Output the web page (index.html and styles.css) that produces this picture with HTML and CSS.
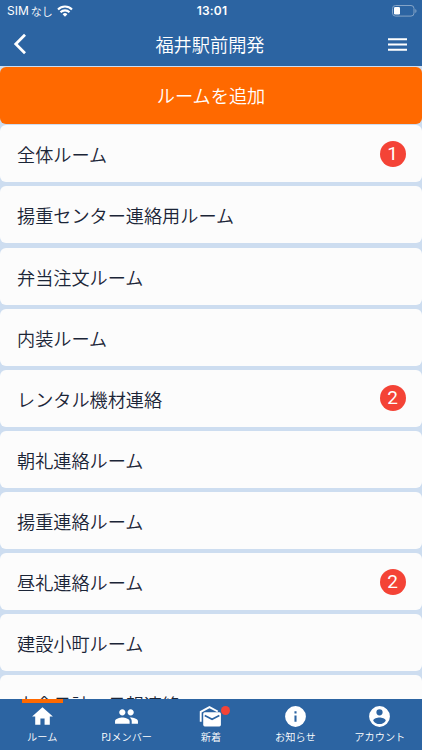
FILE: index.html
```
<!DOCTYPE html>
<html lang="ja">
<head>
<meta charset="utf-8">
<title>福井駅前開発</title>
<link rel="stylesheet" href="styles.css">
</head>
<body>
<div class="app">
  <header class="header">
    <div class="status">
      <span class="carrier"><span class="sim">SIM</span>なし
        <svg class="wifi" viewBox="0 0 16 12"><g fill="none" stroke="#fff" stroke-width="2.1"><path d="M1 4.4a10 10 0 0 1 14 0"/><path d="M3.5 7.2a6.4 6.4 0 0 1 9 0"/></g><path fill="#fff" d="M5.6 9.2a3.5 3.5 0 0 1 4.8 0L8 11.7z"/></svg>
      </span>
      <time class="clock">13:01</time>
      <svg class="battery" viewBox="0 0 25 12"><rect x=".5" y=".5" width="21.5" height="10.6" rx="3" fill="none" stroke="#85a4c7"/><rect x="2" y="2" width="6" height="7.6" rx="1.3" fill="#fff"/><path d="M23.3 4v4q1.2-.5 1.2-2t-1.2-2" fill="#85a4c7"/></svg>
    </div>
    <div class="titlebar">
      <svg class="back" viewBox="0 0 14 22"><path d="M12 1.8 2.8 11l9.2 9.2" fill="none" stroke="#fff" stroke-width="2.8"/></svg>
      <h1 class="title">福井駅前開発</h1>
      <svg class="menu" viewBox="0 0 19 13"><path d="M0 1.2h19M0 6.5h19M0 11.8h19" stroke="#fff" stroke-width="2"/></svg>
    </div>
  </header>
  <main class="rooms">
    <button class="add">ルームを追加</button>
    <ul class="list">
      <li class="room">全体ルーム<span class="badge">1</span></li>
      <li class="room">揚重センター連絡用ルーム</li>
      <li class="room">弁当注文ルーム</li>
      <li class="room">内装ルーム</li>
      <li class="room">レンタル機材連絡<span class="badge">2</span></li>
      <li class="room">朝礼連絡ルーム</li>
      <li class="room">揚重連絡ルーム</li>
      <li class="room">昼礼連絡ルーム<span class="badge">2</span></li>
      <li class="room">建設小町ルーム</li>
      <li class="room">大倉日誌・日報連絡</li>
    </ul>
  </main>
  <nav class="tabs">
    <a class="tab active"><svg class="icon" viewBox="0 0 24 24"><path d="M10 20v-6h4v6h5v-8h3L12 3 2 12h3v8z"/></svg>ルーム</a>
    <a class="tab"><svg class="icon" viewBox="0 0 24 24"><path d="M16 11c1.66 0 2.99-1.34 2.99-3S17.66 5 16 5s-3 1.34-3 3 1.34 3 3 3zm-8 0c1.66 0 2.99-1.34 2.99-3S9.66 5 8 5 5 6.34 5 8s1.34 3 3 3zm0 2c-2.33 0-7 1.17-7 3.5V19h14v-2.5c0-2.33-4.67-3.5-7-3.5zm8 0c-.29 0-.62.02-.97.05 1.16.84 1.97 1.97 1.97 3.45V19h6v-2.5c0-2.33-4.67-3.5-7-3.5z"/></svg>PJメンバー</a>
    <a class="tab"><svg class="icon" viewBox="0 0 24 24"><path d="M2.6 17V7.500L11 3l8 4.200" fill="none" stroke="#fff" stroke-width="1.8"/><rect x="5" y="8" width="17" height="13.5" rx="1.5"/><path d="m6.500 11 7 3.700 7-3.700" fill="none" stroke="#2c64a2" stroke-width="1.5"/></svg><i class="dot"></i>新着</a>
    <a class="tab"><svg class="icon" viewBox="0 0 24 24"><path d="M12 2a10 10 0 1 0 0 20 10 10 0 0 0 0-20zm1 15h-2v-6h2zm0-8h-2V7h2z"/></svg>お知らせ</a>
    <a class="tab"><svg class="icon" viewBox="0 0 24 24"><path d="M12 2a10 10 0 1 0 0 20 10 10 0 0 0 0-20zm0 3a3 3 0 1 1 0 6 3 3 0 0 1 0-6zm0 14.2a7.200 7.200 0 0 1-6-3.220c.03-1.990 4-3.080 6-3.080s5.970 1.090 6 3.080a7.200 7.200 0 0 1-6 3.220z"/></svg>アカウント</a>
  </nav>
</div>
</body>
</html>
```
FILE: styles.css
```
* { box-sizing: border-box; }
body { margin: 0; font-family: "Noto Sans CJK JP", sans-serif; color: #1b2537; }
.app { height: 750px; display: flex; flex-direction: column; overflow: hidden; background: #cdddf0; }
.header { height: 66px; flex: none; background: #2c64a2; color: #fff; }
.status { height: 22px; padding: 0 5px 0 7px; display: grid; grid-template-columns: 1fr auto 1fr; align-items: center; }
.carrier { display: flex; align-items: center; font-size: 11px; font-weight: 350; line-height: 22px; }
.sim { font-family: Inter, sans-serif; font-size: 12px; font-weight: 400; margin-right: 2px; }
.wifi { width: 16px; height: 12px; margin-left: 4px; }
.clock { font: 600 12px/22px Inter, sans-serif; letter-spacing: .2px; }
.battery { width: 25px; height: 12px; justify-self: end; }
.titlebar { height: 44px; padding: 0 15px 0 13px; display: grid; grid-template-columns: 1fr auto 1fr; align-items: center; }
.back { width: 14px; height: 22px; }
.title { margin: 0; padding-top: 1px; font-size: 18.2px; font-weight: 350; line-height: 43px; }
.menu { width: 19px; height: 13px; justify-self: end; }
.rooms { flex: 1; min-height: 0; overflow: hidden; }
.add { display: block; width: 100%; height: 57px; margin: .5px 0 1.8px; padding: 0; border: 0; border-radius: 6px; background: #ff6900; color: #fff; font: 350 18.2px/57px "Noto Sans CJK JP", sans-serif; }
.list { margin: 0; padding: 0; list-style: none; display: flex; flex-direction: column; gap: 4.13px; }
.room { height: 57px; flex: none; padding: 1px 16.5px 0 17px; display: flex; align-items: center; justify-content: space-between; border-radius: 6px; background: #fcfcfc; font-size: 18.15px; font-weight: 350; line-height: 56px; }
.badge { width: 26px; height: 26px; margin-top: -1px; border-radius: 50%; background: #f44336; color: #fff; font: 400 19px/26px Roboto, sans-serif; text-align: center; }
.tabs { height: 51px; flex: none; display: grid; grid-template-columns: repeat(5, 1fr); background: #2c64a2; }
.tab { position: relative; display: flex; flex-direction: column; align-items: center; padding-top: 5px; color: #fff; font-size: 10.2px; font-weight: 350; line-height: 15px; }
.icon { width: 25px; height: 25px; fill: #fff; }
.active::before { content: ""; position: absolute; top: 0; left: 22px; width: 41px; height: 4px; background: #ff6900; }
.dot { position: absolute; left: 52px; top: 7px; width: 9px; height: 9px; border-radius: 50%; background: #f44336; }
```
